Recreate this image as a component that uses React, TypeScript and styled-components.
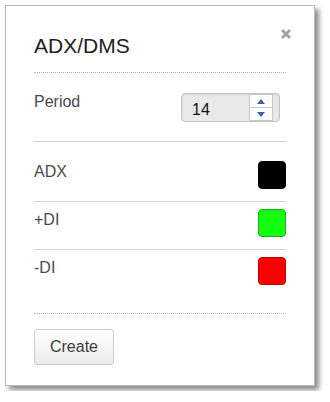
import styled, { createGlobalStyle } from 'styled-components';

const GlobalStyle = createGlobalStyle`
  html, body {
    margin: 0;
    padding: 0;
    background: #fff;
  }

  body {
    font-family: "Liberation Sans", Arial, sans-serif;
  }
`;

const Page = styled.div`
  padding: 5px;
`;

const Panel = styled.div`
  position: relative;
  width: 310px;
  height: 381px;
  box-sizing: border-box;
  padding: 28px 28px 0;

  display: flex;
  flex-direction: column;

  background: #fff;
  border: 1px solid #b8b8b8;
  box-shadow: 4px 4px 5px rgba(0, 0, 0, 0.45);
`;

const Close = styled.button`
  position: absolute;
  top: 21px;
  right: 21px;
  width: 14px;
  height: 14px;
  padding: 0;

  display: flex;
  align-items: center;
  justify-content: center;

  background: none;
  border: 0;
`;

const Title = styled.h2`
  margin: 0;
  font-size: 21px;
  line-height: 24px;
  font-weight: 400;
  color: #1e1e1e;
`;

const DottedLine = styled.div<{ $top: number }>`
  height: 0;
  margin-top: ${p => p.$top}px;
  border-top: 1px dotted #b5b5b5;
`;

const PeriodRow = styled.div`
  padding: 20px 0 19px;

  display: flex;
  align-items: flex-start;
  justify-content: space-between;

  border-bottom: 1px solid #cfcfcf;
`;

const Label = styled.span<{ $offset?: number }>`
  padding-top: ${p => p.$offset ?? 2}px;
  font-size: 16px;
  line-height: 18px;
  color: #4a4a4a;
`;

const Spinner = styled.div`
  width: 99px;
  height: 29px;
  margin-right: 6px;
  box-sizing: border-box;
  padding: 1px 6px 1px 10px;

  display: flex;
  align-items: center;
  justify-content: space-between;

  background: #e9e9e9;
  border: 1px solid #c4c4c4;
  border-radius: 4px;
  box-shadow: inset 0 1px 2px rgba(0, 0, 0, 0.08);
`;

const SpinValue = styled.span`
  padding-top: 4px;
  font-size: 16px;
  color: #111;
`;

const SpinButtons = styled.div`
  width: 24px;
  height: 27px;
  box-sizing: border-box;

  display: flex;
  flex-direction: column;

  background: #fff;
  border: 1px solid #c8c8c8;
`;

const SpinButton = styled.div`
  flex: 1;
  display: flex;
  align-items: center;
  justify-content: center;

  & + & {
    border-top: 1px solid #c8c8c8;
  }
`;

const ColorList = styled.div`
  padding-top: 12px;
`;

const ColorRow = styled.div`
  padding: 7px 0 12px;

  display: flex;
  align-items: flex-start;
  justify-content: space-between;

  & + & {
    border-top: 1px solid #d2d2d2;
  }
`;

const Swatch = styled.div<{ $fill: string; $edge: string }>`
  width: 28px;
  height: 28px;
  box-sizing: border-box;

  background: ${p => p.$fill};
  border: 1px solid ${p => p.$edge};
  border-radius: 4px;
`;

const CreateButton = styled.button`
  width: 80px;
  height: 36px;
  margin-top: 15px;
  padding: 0;

  font-family: "Liberation Sans", Arial, sans-serif;
  font-size: 16px;
  color: #3c3c3c;

  background: linear-gradient(#ffffff, #ececec);
  border: 1px solid #cdcdcd;
  border-radius: 3px;
`;

const LINES = [
  { name: 'ADX', fill: '#000000', edge: '#000000' },
  { name: '+DI', fill: '#14ff10', edge: '#23a81f' },
  { name: '-DI', fill: '#ff0000', edge: '#c40000' },
];

const Arrow = ({ up }: { up?: boolean }) => (
  <svg width="8" height="5" viewBox="0 0 8 5">
    <path d={up ? 'M0 5 L4 0 L8 5 Z' : 'M0 0 L8 0 L4 5 Z'} fill="#3f5fb0" />
  </svg>
);

const App = () => {
  return (
    <Page>
      <GlobalStyle />
      <Panel>
        <Close aria-label="close">
          <svg width="12" height="12" viewBox="0 0 12 12">
            <path d="M2 2 L10 10 M10 2 L2 10" stroke="#a3a3a3" strokeWidth="3" />
          </svg>
        </Close>
        <Title>ADX/DMS</Title>
        <DottedLine $top={14} />
        <PeriodRow>
          <Label $offset={0}>Period</Label>
          <Spinner>
            <SpinValue>14</SpinValue>
            <SpinButtons>
              <SpinButton><Arrow up /></SpinButton>
              <SpinButton><Arrow /></SpinButton>
            </SpinButtons>
          </Spinner>
        </PeriodRow>
        <ColorList>
          {
            LINES.map(line => {
              return (
                <ColorRow key={line.name}>
                  <Label>{ line.name }</Label>
                  <Swatch $fill={line.fill} $edge={line.edge} />
                </ColorRow>
              )
            })
          }
        </ColorList>
        <DottedLine $top={16} />
        <div>
          <CreateButton>Create</CreateButton>
        </div>
      </Panel>
    </Page>
  )
};

export default App;
